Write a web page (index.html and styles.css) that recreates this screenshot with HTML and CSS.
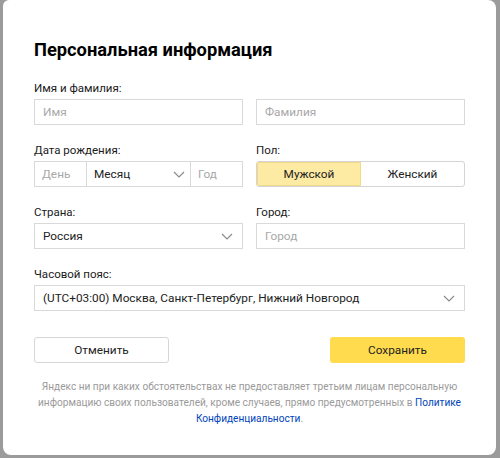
FILE: index.html
```html
<!DOCTYPE html>
<html lang="ru">
<head>
<meta charset="utf-8">
<link rel="stylesheet" href="styles.css">
</head>
<body>
<div class="modal">
  <h1 class="title">Персональная информация</h1>
  <div class="form">
    <div class="field">
      <div class="label">Имя и фамилия:</div>
      <div class="input"><span class="ph">Имя</span></div>
    </div>
    <div class="field">
      <div class="label">&nbsp;</div>
      <div class="input"><span class="ph">Фамилия</span></div>
    </div>
    <div class="field">
      <div class="label">Дата рождения:</div>
      <div class="date">
        <div class="d-day"><span class="ph">День</span></div>
        <div class="d-month"><span class="val">Месяц</span><svg class="chev" width="12" height="7" viewBox="0 0 12 7"><path d="M1 1l5 5 5-5" fill="none" stroke="#888" stroke-width="1.1"/></svg></div>
        <div class="d-year"><span class="ph">Год</span></div>
      </div>
    </div>
    <div class="field">
      <div class="label">Пол:</div>
      <div class="toggle">
        <div class="opt on">Мужской</div>
        <div class="opt">Женский</div>
      </div>
    </div>
    <div class="field">
      <div class="label">Страна:</div>
      <div class="input select"><span class="val">Россия</span><svg class="chev" width="12" height="7" viewBox="0 0 12 7"><path d="M1 1l5 5 5-5" fill="none" stroke="#888" stroke-width="1.1"/></svg></div>
    </div>
    <div class="field">
      <div class="label">Город:</div>
      <div class="input"><span class="ph">Город</span></div>
    </div>
    <div class="field wide">
      <div class="label">Часовой пояс:</div>
      <div class="input select"><span class="val">(UTC+03:00) Москва, Санкт-Петербург, Нижний Новгород</span><svg class="chev" width="12" height="7" viewBox="0 0 12 7"><path d="M1 1l5 5 5-5" fill="none" stroke="#888" stroke-width="1.1"/></svg></div>
    </div>
  </div>
  <div class="actions">
    <div class="btn cancel">Отменить</div>
    <div class="btn save">Сохранить</div>
  </div>
  <p class="note">Яндекс ни при каких обстоятельствах не предоставляет третьим лицам персональную<br>информацию своих пользователей, кроме случаев, прямо предусмотренных в <a class="link">Политике<br>Конфиденциальности</a>.</p>
</div>
</body>
</html>
```
FILE: styles.css
```css
html, body {
  margin: 0;
  padding: 0;
}
body {
  width: 500px;
  height: 458px;
  overflow: hidden;
  background: #9b9b9b;
  font-family: Roboto, "Liberation Sans", sans-serif;
  color: #000;
}
.modal {
  box-sizing: border-box;
  margin-left: 3px;
  width: 493px;
  height: 455px;
  background: #fff;
  border-radius: 6px 8px 8px 8px;
  padding: 38px 31px 0;
}
.title {
  margin: 0;
  font-size: 18.3px;
  line-height: 24px;
  font-weight: 700;
}
.form {
  margin-top: 18px;
  display: grid;
  grid-template-columns: 209px 209px;
  column-gap: 13px;
  row-gap: 17px;
}
.wide {
  grid-column: 1 / 3;
}
.label {
  font-size: 11.5px;
  line-height: 16px;
  height: 16px;
  margin-bottom: 3px;
  color: #1a1a1a;
}
.input {
  box-sizing: border-box;
  height: 26px;
  border: 1px solid #d9d9d9;
  display: flex;
  align-items: center;
  padding: 0 8px;
  font-size: 12px;
}
.ph {
  color: #a8a8a8;
  font-size: 11.8px;
}
.val {
  color: #222;
  font-size: 11.8px;
}
.select {
  justify-content: space-between;
  padding-right: 9px;
}
.date {
  box-sizing: border-box;
  height: 26px;
  border: 1px solid #d9d9d9;
  display: grid;
  grid-template-columns: 51px 105px 1fr;
}
.date > div {
  display: flex;
  align-items: center;
  padding: 0 7px;
}
.d-month {
  border-left: 1px solid #d9d9d9;
  border-right: 1px solid #d9d9d9;
  justify-content: space-between;
  padding-right: 5px !important;
}
.toggle {
  box-sizing: border-box;
  height: 26px;
  border: 1px solid #d4d4d4;
  border-radius: 3px;
  display: grid;
  grid-template-columns: 104px 1fr;
  overflow: hidden;
}
.opt {
  display: flex;
  align-items: center;
  justify-content: center;
  font-size: 11.8px;
  color: #222;
}
.opt.on {
  background: #feeba3;
  box-shadow: inset 0 0 0 1px #f0d98a;
}
.actions {
  margin-top: 26px;
  display: flex;
  justify-content: space-between;
}
.btn {
  box-sizing: border-box;
  width: 135px;
  height: 26px;
  border-radius: 3px;
  display: flex;
  align-items: center;
  justify-content: center;
  font-size: 11.8px;
  color: #222;
}
.cancel {
  border: 1px solid #d6d6d6;
}
.save {
  background: #ffdb4d;
}
.note {
  margin: 16px 0 0;
  text-align: center;
  font-size: 10.1px;
  line-height: 16px;
  color: #9a9a9a;
  white-space: nowrap;
}
.link {
  color: #0044bb;
}
```
